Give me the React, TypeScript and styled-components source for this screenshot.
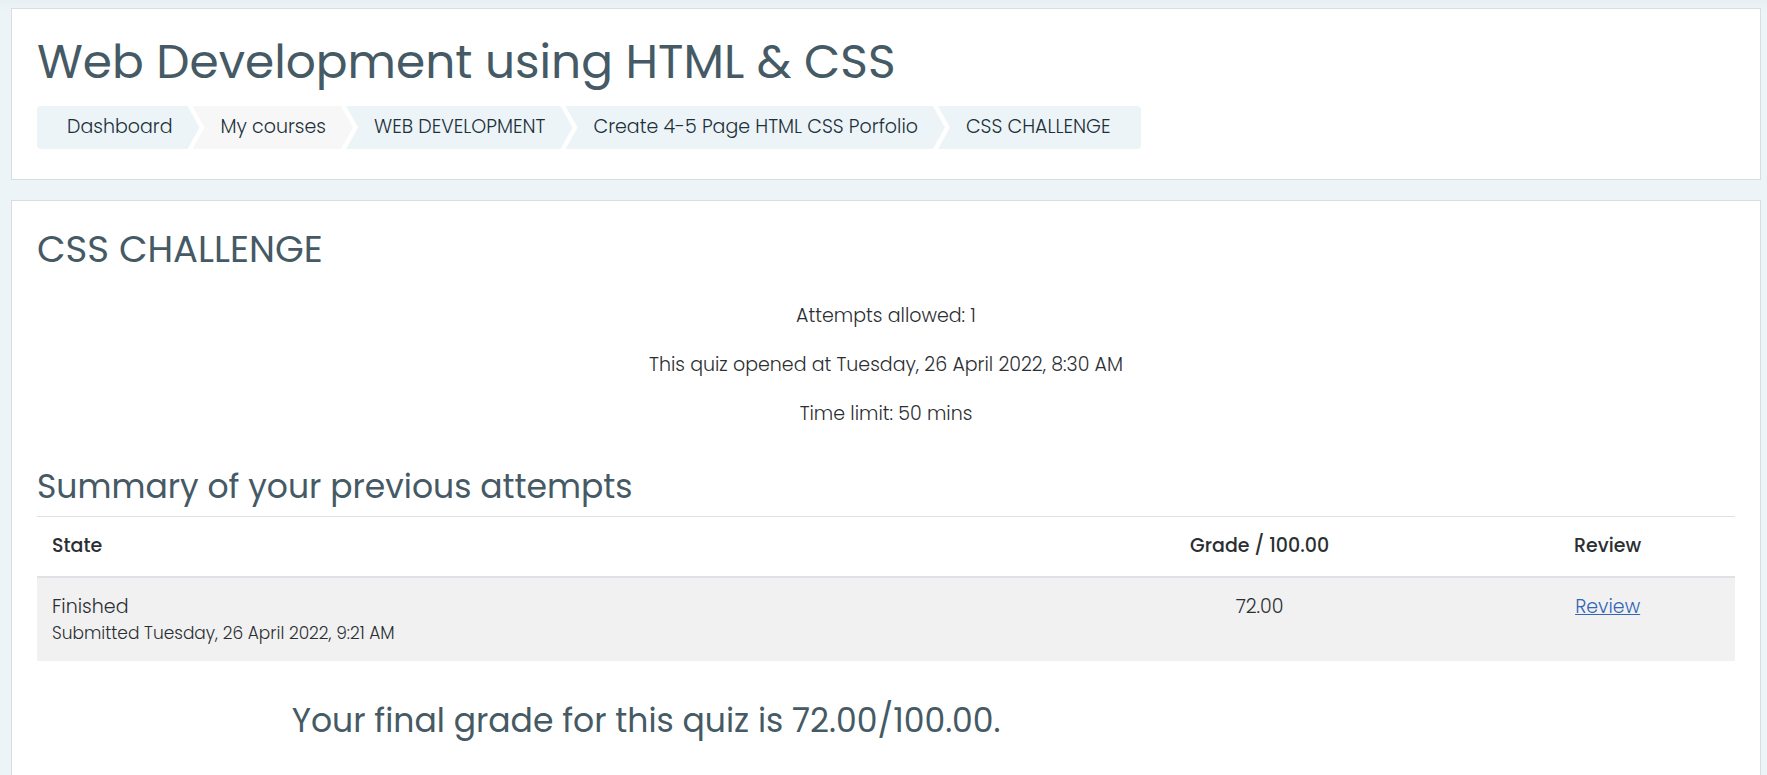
import React from "react";
import styled, { createGlobalStyle } from "styled-components";

const GlobalStyle = createGlobalStyle`
  * { box-sizing: border-box; }
  body {
    margin: 0;
    min-height: 100vh;
    background: #ecf4f8;
    color: #2b2f33;
    font-family: Poppins, Inter, "Liberation Sans", sans-serif;
    font-size: 19px;
    font-weight: 300;
    line-height: 27px;
  }
  #root { min-height: 100vh; display: flex; flex-direction: column; }
`;

const Page = styled.div`
  flex: 1;
  display: flex;
  flex-direction: column;
  gap: 20px;
  padding: 8px 6px 0 11px;
  background: linear-gradient(#e8f0f3, #ecf4f8 12px);
`;

const Card = styled.section<{ $open?: boolean }>`
  flex: ${(p) => (p.$open ? 1 : "none")};
  padding: 25px;
  border: 1px solid #d5dfe3;
  border-bottom-width: ${(p) => (p.$open ? 0 : "1px")};
  background: #fff;
`;

const Heading = styled.h1`
  margin: 0;
  color: #455a64;
  font-size: 47px;
  font-weight: 400;
  line-height: 56px;
`;

const Title = styled.h2`
  margin: 0;
  color: #455a64;
  font-size: 37px;
  font-weight: 400;
  line-height: 46px;
`;

const Subtitle = styled.h3`
  margin: 0;
  color: #455a64;
  font-size: 33px;
  font-weight: 400;
  line-height: 40px;
`;

const Crumbs = styled.ol`
  display: flex;
  margin: 16px 0 5px;
  padding: 0;
  list-style: none;
`;

const Crumb = styled.li<{ $tone?: string }>`
  margin-right: -7px;
  padding: 7px 27px 9px 28px;
  background: ${(p) => p.$tone ?? "#ecf4f8"};
  clip-path: polygon(0 0, calc(100% - 12px) 0, 100% 50%, calc(100% - 12px) 100%, 0 100%, 12px 50%);

  &:first-child {
    padding-left: 30px;
    border-radius: 4px 0 0 4px;
    clip-path: polygon(0 0, calc(100% - 12px) 0, 100% 50%, calc(100% - 12px) 100%, 0 100%);
  }
  &:last-child {
    margin-right: 0;
    padding-right: 31px;
    border-radius: 0 4px 4px 0;
    clip-path: polygon(0 0, 100% 0, 100% 100%, 0 100%, 12px 50%);
  }
`;

const CrumbLink = styled.a`
  color: #1c313a;
  text-decoration: none;
`;

const QuizInfo = styled.div`
  display: flex;
  flex-direction: column;
  gap: 22px;
  margin: 30px 0 40px;
  text-align: center;
`;

const Line = styled.p`
  margin: 0;
`;

const Attempts = styled.table`
  width: 100%;
  margin: 9px 0 40px;
  border-collapse: separate;
  border-spacing: 0;
  table-layout: fixed;
`;

const HeadCell = styled.th<{ $width: string; $center?: boolean }>`
  width: ${(p) => p.$width};
  padding: 15px 15px 17px;
  border-top: 1px solid #dee2e6;
  border-bottom: 2px solid #dee2e6;
  font-weight: 500;
  text-align: ${(p) => (p.$center ? "center" : "left")};
`;

const Cell = styled.td<{ $center?: boolean }>`
  padding: 15px 15px 14px;
  background: #f1f1f1;
  text-align: ${(p) => (p.$center ? "center" : "left")};
  vertical-align: top;
`;

const Submitted = styled.span`
  display: block;
  font-size: 17px;
`;

const ReviewLink = styled.a`
  color: #3366b8;
  text-decoration: underline;
`;

const FinalGrade = styled.div`
  padding-left: 15%;
`;

const crumbs = [
  { label: "Dashboard" },
  { label: "My courses", tone: "#f7f7f7" },
  { label: "WEB DEVELOPMENT" },
  { label: "Create 4-5 Page HTML CSS Porfolio" },
  { label: "CSS CHALLENGE" },
];

export default function App() {
  return (
    <>
      <GlobalStyle />
      <Page>
        <Card as="header">
          <Heading>Web Development using HTML &amp; CSS</Heading>
          <nav aria-label="Breadcrumb">
            <Crumbs>
              {crumbs.map((c) => (
                <Crumb key={c.label} $tone={c.tone}>
                  <CrumbLink href="#">{c.label}</CrumbLink>
                </Crumb>
              ))}
            </Crumbs>
          </nav>
        </Card>
        <Card as="main" $open>
          <Title>CSS CHALLENGE</Title>
          <QuizInfo>
            <Line>Attempts allowed: 1</Line>
            <Line>This quiz opened at Tuesday, 26 April 2022, 8:30 AM</Line>
            <Line>Time limit: 50 mins</Line>
          </QuizInfo>
          <Subtitle>Summary of your previous attempts</Subtitle>
          <Attempts>
            <thead>
              <tr>
                <HeadCell scope="col" $width="59%">State</HeadCell>
                <HeadCell scope="col" $width="26%" $center>Grade / 100.00</HeadCell>
                <HeadCell scope="col" $width="15%" $center>Review</HeadCell>
              </tr>
            </thead>
            <tbody>
              <tr>
                <Cell>
                  Finished
                  <Submitted>Submitted Tuesday, 26 April 2022, 9:21 AM</Submitted>
                </Cell>
                <Cell $center>72.00</Cell>
                <Cell $center>
                  <ReviewLink href="#">Review</ReviewLink>
                </Cell>
              </tr>
            </tbody>
          </Attempts>
          <FinalGrade>
            <Subtitle>Your final grade for this quiz is 72.00/100.00.</Subtitle>
          </FinalGrade>
        </Card>
      </Page>
    </>
  );
}
